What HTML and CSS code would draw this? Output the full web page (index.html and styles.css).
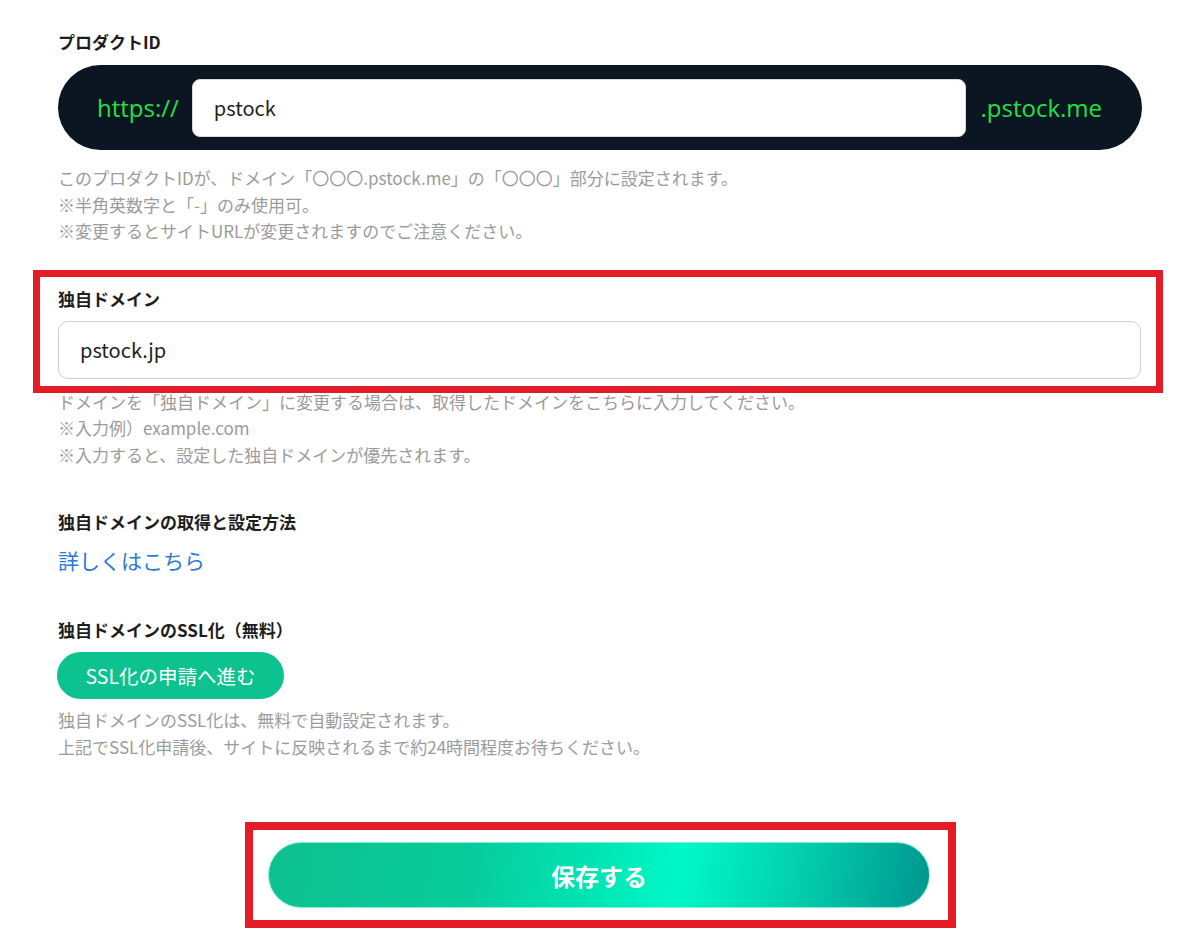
FILE: index.html
```html
<!DOCTYPE html>
<html lang="ja">
<head>
<meta charset="utf-8">
<title>ドメイン設定</title>
<link rel="stylesheet" href="styles.css">
</head>
<body>
<main class="page">
  <section class="field">
    <h2 class="label">プロダクトID</h2>
    <div class="url-pill">
      <span class="url-part">https://</span>
      <div class="url-input">pstock</div>
      <span class="url-part">.pstock.me</span>
    </div>
    <div class="help help-first">
      <p>このプロダクトIDが、ドメイン「〇〇〇.pstock.me」の「〇〇〇」部分に設定されます。</p>
      <p>※半角英数字と「-」のみ使用可。</p>
      <p>※変更するとサイトURLが変更されますのでご注意ください。</p>
    </div>
  </section>

  <section class="highlight">
    <h2 class="label">独自ドメイン</h2>
    <div class="text-input">pstock.jp</div>
  </section>
  <div class="help help-after-box">
    <p>ドメインを「独自ドメイン」に変更する場合は、取得したドメインをこちらに入力してください。</p>
    <p>※入力例）example.com</p>
    <p>※入力すると、設定した独自ドメインが優先されます。</p>
  </div>

  <section class="field field-gap">
    <h2 class="label">独自ドメインの取得と設定方法</h2>
    <a class="link" href="#">詳しくはこちら</a>
  </section>

  <section class="field field-gap">
    <h2 class="label">独自ドメインのSSL化（無料）</h2>
    <button class="ssl-btn" type="button">SSL化の申請へ進む</button>
    <div class="help help-ssl">
      <p>独自ドメインのSSL化は、無料で自動設定されます。</p>
      <p>上記でSSL化申請後、サイトに反映されるまで約24時間程度お待ちください。</p>
    </div>
  </section>

  <div class="save-wrap">
    <div class="save-box">
      <button class="save-btn" type="button">保存する</button>
    </div>
  </div>
</main>
</body>
</html>
```

FILE: styles.css
```css
* { box-sizing: border-box; }
html, body { margin: 0; padding: 0; background: #fff; }
body {
  font-family: "Noto Sans CJK JP", "Noto Sans", sans-serif;
  color: #222;
}
p { margin: 0; }
h2 { margin: 0; }

.page {
  width: 1200px;
  padding: 30px 58px 0 58px;
}

.label {
  font-size: 17px;
  font-weight: 700;
  line-height: 24px;
  color: #1e1e1e;
}

.url-pill {
  margin-top: 11px;
  height: 85px;
  background: #0b1622;
  border-radius: 43px;
  display: flex;
  align-items: center;
  padding: 0 40px 0 39px;
}
.url-part {
  font-family: "Open Sans", "Noto Sans", sans-serif;
  font-size: 24px;
  color: #25e041;
  line-height: 1;
}
.url-input {
  margin: 0 14px 0 13px;
  flex: 1;
  height: 58px;
  background: #fff;
  border: 1px solid #d8d8d8;
  border-radius: 8px;
  display: flex;
  align-items: center;
  padding-left: 21px;
  font-size: 20px;
  color: #222;
}

.help {
  font-size: 17px;
  line-height: 26.5px;
  color: #9b9b9b;
}
.help-first { margin-top: 15px; }

.highlight {
  margin: 25px -21px 0 -25px;
  border: 7px solid #e31c25;
  padding: 10px 15px 7px 18px;
}
.text-input {
  margin-top: 10px;
  height: 58px;
  border: 1px solid #cfcfcf;
  border-radius: 10px;
  display: flex;
  align-items: center;
  padding-left: 21px;
  font-size: 20px;
  color: #222;
}
.help-after-box { margin-top: -4px; }

.field-gap { margin-top: 42px; }

.link {
  display: block;
  margin-top: 10px;
  font-size: 21px;
  line-height: 32px;
  color: #2c79d4;
  text-decoration: none;
}

.ssl-btn {
  display: block;
  margin-top: 10px;
  margin-left: -1px;
  height: 47px;
  width: 227px;
  border: none;
  border-radius: 24px;
  background: #0cc28f;
  color: #fff;
  font-family: "Noto Sans CJK JP", "Noto Sans", sans-serif;
  font-size: 19.5px;
  padding: 0;
  cursor: pointer;
}
.help-ssl { margin-top: 8px; }

.save-wrap {
  margin-top: 62px;
  display: flex;
  justify-content: center;
  padding-left: 1px;
}
.save-box {
  width: 711px;
  border: 8px solid #e31c25;
  padding: 12px 18px 12px 15px;
}
.save-btn {
  display: block;
  width: 100%;
  height: 66px;
  border: 1px solid #7ff0d2;
  border-radius: 33px;
  background: linear-gradient(100deg, #0ec08f 0%, #08cb9a 30%, #00e6b4 50%, #00f8c8 62%, #03d3b0 78%, #00968f 100%);
  color: #fff;
  font-family: "Noto Sans CJK JP", "Noto Sans", sans-serif;
  font-size: 24px;
  font-weight: 700;
  cursor: pointer;
}
```
